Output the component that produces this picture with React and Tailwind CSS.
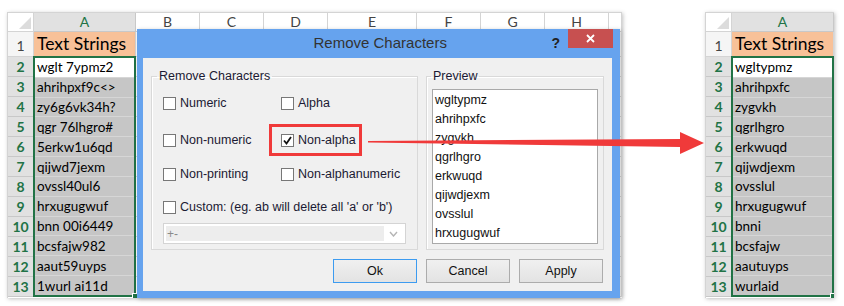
import React from 'react';

const LEFT_VALUES = [
  'wglt 7ypmz2', 'ahrihpxf9c<>', 'zy6g6vk34h?', 'qgr 76lhgro#', '5erkw1u6qd', 'qijwd7jexm',
  'ovssl40ul6', 'hrxugugwuf', 'bnn 00i6449', 'bcsfajw982', 'aaut59uyps', '1wurl ai11d',
];

const RIGHT_VALUES = [
  'wgltypmz', 'ahrihpxfc', 'zygvkh', 'qgrlhgro', 'erkwuqd', 'qijwdjexm',
  'ovsslul', 'hrxugugwuf', 'bnni', 'bcsfajw', 'aautuyps', 'wurlaid',
];

const PREVIEW = ['wgltypmz', 'ahrihpxfc', 'zygvkh', 'qgrlhgro', 'erkwuqd', 'qijwdjexm', 'ovsslul', 'hrxugugwuf'];

const OTHER_COLS = [
  { name: 'B', w: 'w-[64px]' },
  { name: 'C', w: 'w-[64px]' },
  { name: 'D', w: 'w-[64px]' },
  { name: 'E', w: 'w-[89px]' },
  { name: 'F', w: 'w-[64px]' },
  { name: 'G', w: 'w-[64px]' },
  { name: 'H', w: 'w-[64px]' },
  { name: '', w: 'w-[13px]' },
];

const sheetFont = { fontFamily: 'Lato, "Liberation Sans", sans-serif' };
const uiFont = { fontFamily: '"Liberation Sans", Arial, sans-serif' };

const RowHeaders = () => (
  <div className="w-[26px] flex flex-col shrink-0">
    <div className="h-[19px] bg-white border-r border-b border-[#d4d4d4] flex items-end justify-end pr-[2px] pb-[2px]">
      <svg width="12" height="12" viewBox="0 0 12 12">
        <polygon points="12,0 12,12 0,12" fill="#dcdcdc" />
      </svg>
    </div>
    <div className="h-[25px] bg-[#f5f5f5] border-r border-b border-[#d4d4d4] flex items-end justify-center pb-[1px] text-[14px] leading-[18px] text-[#444]">
      1
    </div>
    {LEFT_VALUES.map((_, i) => (
      <div
        key={i}
        className="h-[20px] bg-[#e1e1e1] border-r border-b border-[#c8c8c8] flex items-center justify-center text-[14px] leading-[18px] font-bold text-[#217346]"
      >
        {i + 2}
      </div>
    ))}
  </div>
);

const ColumnA = ({ values }) => (
  <div className="w-[102px] flex flex-col shrink-0">
    <div className="h-[19px] bg-[#e1e1e1] border-r border-b border-[#c8c8c8] flex items-center justify-center text-[14px] leading-[18px] text-[#217346]">
      A
    </div>
    <div className="h-[25px] bg-[#f8c198] border-r border-b border-[#d4d4d4] flex items-center pl-[3px] text-[17.5px] leading-[22px] text-black whitespace-nowrap">
      Text Strings
    </div>
    <div className="relative h-[241px] border-2 border-[#217346] flex flex-col -ml-[1px] -mt-[1px]">
      {values.map((v, i) => (
        <div
          key={i}
          className={`flex-1 min-h-0 flex items-center pl-[2px] text-[13.5px] leading-[16px] text-black whitespace-nowrap ${
            i === 0 ? 'bg-white' : 'bg-[#c6c6c6] border-t border-[#d6d6d6]'
          }`}
        >
          {v}
        </div>
      ))}
      <span className="absolute -right-[4px] -bottom-[4px] w-[6px] h-[6px] bg-[#217346] border border-white" />
    </div>
  </div>
);

const EmptyColumn = ({ name, w }) => (
  <div className={`${w} flex flex-col shrink-0`}>
    <div className="h-[19px] bg-white border-r border-b border-[#d4d4d4] flex items-center justify-center text-[14px] leading-[18px] text-[#444]">
      {name}
    </div>
    <div className="h-[25px] bg-white border-r border-b border-[#dadada]" />
    {LEFT_VALUES.map((_, i) => (
      <div key={i} className="h-[20px] bg-white border-r border-b border-[#dadada]" />
    ))}
  </div>
);

const CheckBox = ({ checked, label }) => (
  <label className="flex items-center gap-[4px] text-[12.5px] text-[#1b1a33] whitespace-nowrap">
    <span className="w-[13px] h-[13px] bg-white border border-[#777] flex items-center justify-center">
      {checked && (
        <svg width="9" height="9" viewBox="0 0 9 9">
          <path d="M1 4.5 L3.5 7.5 L8 1" fill="none" stroke="#111" strokeWidth="1.8" />
        </svg>
      )}
    </span>
    {label}
  </label>
);

const Dialog = () => (
  <div
    className="absolute left-[137px] top-[29px] w-[483px] h-[269px] bg-[#66a3ee] flex flex-col shadow-[1px_1px_4px_rgba(0,0,0,0.25)]"
    style={uiFont}
  >
    <div className="h-[29px] flex items-start shrink-0">
      <div className="flex-1 h-full flex items-center justify-center pl-[72px] text-[15px] text-[#333]">
        Remove Characters
      </div>
      <span className="mt-[4px] mr-[8px] text-[14px] font-bold text-[#222]">?</span>
      <button className="w-[45px] h-[19px] mr-[7px] bg-[#c75050] flex items-center justify-center">
        <svg width="9" height="9" viewBox="0 0 9 9">
          <path d="M1 1 L8 8 M8 1 L1 8" stroke="white" strokeWidth="1.8" />
        </svg>
      </button>
    </div>

    <div className="flex-1 ml-[6px] mr-[8px] mb-[7px] bg-[#f0f0f0] flex flex-col pt-[11px]">
      <div className="flex gap-[8px] pl-[8px]">
        <fieldset className="w-[267px] h-[181px] border border-[#d9d9d9] shadow-[inset_1px_1px_0_white] pl-[11px]">
          <legend className="ml-[-6px] px-[2px] text-[12.5px] text-[#1b1a33] leading-[14px]">Remove Characters</legend>
          <div className="flex h-[20px] mt-[10px] items-center">
            <div className="w-[118px]"><CheckBox label="Numeric" /></div>
            <CheckBox label="Alpha" />
          </div>
          <div className="flex h-[20px] mt-[17px] items-center">
            <div className="w-[106px]"><CheckBox label="Non-numeric" /></div>
            <div className="w-[93px] h-[32px] border-[3px] border-[#f03a3a] flex items-center pl-[9px]">
              <CheckBox checked label="Non-alpha" />
            </div>
          </div>
          <div className="flex h-[20px] mt-[14px] items-center">
            <div className="w-[118px]"><CheckBox label="Non-printing" /></div>
            <CheckBox label="Non-alphanumeric" />
          </div>
          <div className="flex h-[20px] mt-[13px] items-center">
            <CheckBox label="Custom: (eg. ab will delete all 'a' or 'b')" />
          </div>
          <div className="mt-[6px] w-[243px] h-[21px] border border-[#d4d4d4] bg-white flex items-center p-[2px]">
            <div className="flex-1 h-full bg-[#ededed] flex items-center pl-[1px] text-[12px] text-[#8a8a8a]">+-</div>
            <div className="w-[19px] flex items-center justify-center">
              <svg width="9" height="6" viewBox="0 0 9 6">
                <path d="M1 1 L4.5 5 L8 1" fill="none" stroke="#b5b5b5" strokeWidth="1.4" />
              </svg>
            </div>
          </div>
        </fieldset>

        <fieldset className="w-[178px] h-[181px] border border-[#d9d9d9] shadow-[inset_1px_1px_0_white] pl-[5px]">
          <legend className="ml-[-1px] px-[2px] text-[12.5px] text-[#1b1a33] leading-[14px]">Preview</legend>
          <div className="mt-[6px] w-[166px] h-[155px] bg-white border border-[#a9a9a9] pt-[1px] pl-[2px] overflow-hidden">
            {PREVIEW.map((p) => (
              <div key={p} className="h-[19px] flex items-center text-[12.5px] text-[#111]">{p}</div>
            ))}
          </div>
        </fieldset>
      </div>

      <div className="flex justify-end gap-[9px] pr-[9px] mt-[9px]">
        <button className="w-[84px] h-[24px] border border-[#3c9bf0] bg-gradient-to-b from-[#f0f0f0] to-[#e3e3e3] text-[12.5px] text-[#111]">Ok</button>
        <button className="w-[84px] h-[24px] border border-[#acacac] bg-gradient-to-b from-[#f0f0f0] to-[#e3e3e3] text-[12.5px] text-[#111]">Cancel</button>
        <button className="w-[84px] h-[24px] border border-[#acacac] bg-gradient-to-b from-[#f0f0f0] to-[#e3e3e3] text-[12.5px] text-[#111]">Apply</button>
      </div>
    </div>
  </div>
);

export default function App() {
  return (
    <div className="relative w-[844px] h-[306px] bg-white overflow-hidden" style={sheetFont}>
      <div className="flex pt-[12px]">
        {/* source sheet */}
        <div className="ml-[7px] flex h-[286px] overflow-hidden border-l border-t border-[#d4d4d4] shadow-[1px_1px_4px_rgba(0,0,0,0.25)]">
          <RowHeaders />
          <ColumnA values={LEFT_VALUES} />
          {OTHER_COLS.map((c) => (
            <EmptyColumn key={c.name || 'i'} name={c.name} w={c.w} />
          ))}
        </div>

        {/* result sheet */}
        <div className="ml-[83px] flex h-[286px] overflow-hidden border-l border-t border-[#d4d4d4] shadow-[1px_1px_4px_rgba(0,0,0,0.25)]">
          <RowHeaders />
          <ColumnA values={RIGHT_VALUES} />
        </div>
      </div>

      <Dialog />

      <svg className="absolute left-0 top-0 pointer-events-none" width="844" height="306" viewBox="0 0 844 306">
        <polygon points="368,141 680,139 680,132 704,143 680,154 680,147 368,142.5" fill="#f03a3a" />
      </svg>
    </div>
  );
}
